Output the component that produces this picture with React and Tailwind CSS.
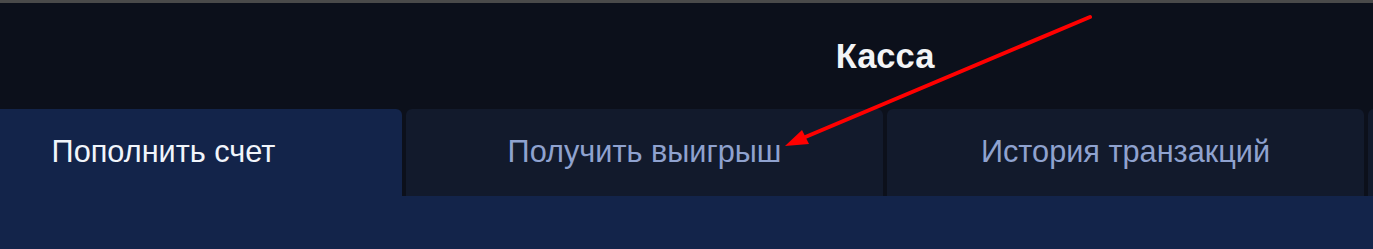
import { useState } from "react";

const tabs = ["Пополнить счет", "Получить выигрыш", "История транзакций", ""];

const Arrow = () => (
  <svg
    className="absolute inset-0 pointer-events-none"
    width="1373"
    height="249"
    viewBox="0 0 1373 249"
  >
    <line x1="1090" y1="17" x2="803" y2="138" stroke="#ff0000" strokeWidth="4" strokeLinecap="round" />
    <polygon points="785,146 809,144 802,130" fill="#ff0000" />
  </svg>
);

export default function App() {
  const [active, setActive] = useState(0);

  return (
    <div
      className="relative w-full h-[249px] overflow-hidden bg-[#0c101b]"
      style={{ fontFamily: '"Liberation Sans", Arial, sans-serif' }}
    >
      <div className="h-[3px] bg-[#4a4a4a]" />
      <div className="w-[1920px] ml-[-75px]">
        <div className="h-[106px] flex items-center justify-center">
          <h1 className="text-[34.5px] font-bold text-[#f3f4f6] leading-none">Касса</h1>
        </div>
        <div className="flex gap-1 h-[87px]">
          {tabs.map((t, i) => (
            <button
              key={i}
              onClick={() => setActive(i)}
              className={`w-[477px] shrink-0 rounded-t-md flex items-center justify-center text-[30.7px] leading-none ${
                active === i ? "bg-[#13244a] text-[#f1f5fb]" : "bg-[#121a2c] text-[#8fa2cf]"
              }`}
            >
              {t}
            </button>
          ))}
        </div>
        <div className="h-[53px] bg-[#13244a]" />
      </div>
      <Arrow />
    </div>
  );
}
